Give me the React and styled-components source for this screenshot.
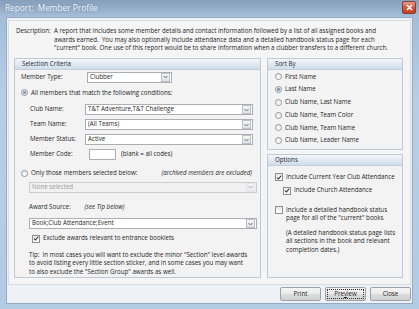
import React from 'react'
import styled, { createGlobalStyle } from 'styled-components'

const Global = createGlobalStyle`
html, body {
margin: 0;
padding: 0;
background: #b4cbe5;
}
* {
box-sizing: border-box;
}
`

function Arrow() {
    return (
        <svg width="5" height="4" viewBox="0 0 5 4">
            <path d="M0.5 1 L2.5 3 L4.5 1" fill="none" stroke="#6a6f78" strokeWidth="1"/>
        </svg>
    )
}

function Select(props) {
    return (
        <SelectBox width={props.width} disabled={props.disabled}>
            <SelectText disabled={props.disabled}>{props.value}</SelectText>
            <SelectButton disabled={props.disabled}><Arrow/></SelectButton>
        </SelectBox>
    )
}

function Radio(props) {
    return (
        <RadioRow top={props.top}>
            <RadioDot checked={props.checked}/>
            <span>{props.children}</span>
        </RadioRow>
    )
}

function Check(props) {
    return (
        <CheckRow indent={props.indent} top={props.top}>
            <CheckBox>
                {props.checked &&
                <svg width="7" height="7" viewBox="0 0 7 7">
                    <path d="M1 3.5 L2.8 5.3 L6 1.5" fill="none" stroke="#222" strokeWidth="1.2"/>
                </svg>
                }
            </CheckBox>
            <span>{props.children}</span>
        </CheckRow>
    )
}

function App() {
    return (
        <Window>
            <Global/>
            <TitleBar>
                <Title>Report:&nbsp; Member Profile</Title>
                <CloseButton>
                    <svg width="7" height="7" viewBox="0 0 7 7">
                        <path d="M1 1 L6 6 M6 1 L1 6" stroke="#fff" strokeWidth="1.6"/>
                    </svg>
                </CloseButton>
            </TitleBar>

            <Client>
                <Panel>
                    <Description>
                        <DescLabel>Description:</DescLabel>
                        <DescText>
                            A report that includes some member details and contact information followed by a list of all assigned books and<br/>
                            awards earned.&nbsp; You may also optionally include attendance data and a detailed handbook status page for each<br/>
                            "current" book. One use of this report would be to share information when a clubber transfers to a different church.
                        </DescText>
                    </Description>

                    <Columns>
                        <Group>
                            <GroupHeader>Selection Criteria</GroupHeader>
                            <GroupBody>
                                <FieldRow top="2px">
                                    <FieldLabel width="66px">Member Type:</FieldLabel>
                                    <Select width="85px" value="Clubber"/>
                                </FieldRow>

                                <Radio checked top="6px">All members that match the following conditions:</Radio>

                                <Conditions>
                                    <FieldRow top="7px">
                                        <FieldLabel width="55px">Club Name:</FieldLabel>
                                        <Select width="171px" value="T&T Adventure,T&T Challenge"/>
                                    </FieldRow>
                                    <FieldRow top="4px">
                                        <FieldLabel width="55px">Team Name:</FieldLabel>
                                        <Select width="171px" value="(All Teams)"/>
                                    </FieldRow>
                                    <FieldRow top="4px">
                                        <FieldLabel width="55px">Member Status:</FieldLabel>
                                        <Select width="171px" value="Active"/>
                                    </FieldRow>
                                    <FieldRow top="4px">
                                        <FieldLabel width="57px">Member Code:</FieldLabel>
                                        <CodeInput/>
                                        <Hint>(blank = all codes)</Hint>
                                    </FieldRow>
                                </Conditions>

                                <OnlyRow>
                                    <Radio>Only those members selected below:</Radio>
                                    <Italic>(archived members are excluded)</Italic>
                                </OnlyRow>
                                <Indented top="4px">
                                    <Select width="228px" value="None selected" disabled/>
                                </Indented>

                                <AwardLabel>
                                    Award Source:<Italic>(see Tip below)</Italic>
                                </AwardLabel>
                                <Indented top="7px">
                                    <Select width="228px" value="Book;Club Attendance;Event"/>
                                </Indented>
                                <Check checked indent="11px" top="5px">Exclude awards relevant to entrance booklets</Check>

                                <Tip>
                                    Tip:&nbsp; In most cases you will want to exclude the minor "Section" level awards<br/>
                                    to avoid listing every little section sticker, and in some cases you may want<br/>
                                    to also exclude the "Section Group" awards as well.
                                </Tip>
                            </GroupBody>
                        </Group>

                        <SideColumn>
                            <Group height="92px">
                                <GroupHeader>Sort By</GroupHeader>
                                <SortBody>
                                    <Radio>First Name</Radio>
                                    <Radio checked>Last Name</Radio>
                                    <Radio>Club Name, Last Name</Radio>
                                    <Radio>Club Name, Team Color</Radio>
                                    <Radio>Club Name, Team Name</Radio>
                                    <Radio>Club Name, Leader Name</Radio>
                                </SortBody>
                            </Group>

                            <Group>
                                <GroupHeader>Options</GroupHeader>
                                <OptionsBody>
                                    <Check checked>Include Current Year Club Attendance</Check>
                                    <Check checked indent="8px" top="5px">Include Church Attendance</Check>
                                    <Check top="11px">Include a detailed handbook status<br/>page for all of the "current" books</Check>
                                    <Note>
                                        (A detailed handbook status page lists<br/>
                                        all sections in the book and relevant<br/>
                                        completion dates.)
                                    </Note>
                                </OptionsBody>
                            </Group>
                        </SideColumn>
                    </Columns>
                </Panel>

                <ButtonRow>
                    <Button>Print</Button>
                    <Button focused>Pre<u>v</u>iew</Button>
                    <Button>Close</Button>
                </ButtonRow>
            </Client>
        </Window>
    )
}

export default App

const Window = styled.div`
width: 419px;
height: 309px;
display: flex;
flex-direction: column;
background: linear-gradient(#9fb9d6, #b7cde6 30%, #b4cbe5);
padding: 0 6px 5px 6px;
font-family: "Open Sans", "Noto Sans", sans-serif;
font-size: 6.2px;
line-height: 8.5px;
color: #1f1f1f;
`

const TitleBar = styled.div`
height: 17px;
flex: none;
display: flex;
align-items: center;
justify-content: space-between;
margin: 0 -6px;
padding: 0 3px 0 5px;
background: linear-gradient(#869fbc, #98b1cc 60%, #a7bfd9);
`

const Title = styled.div`
font-size: 8.3px;
color: #f2f5f9;
text-shadow: 0 0 3px #6c85a2;
`

const CloseButton = styled.div`
width: 14px;
height: 13px;
margin-top: -2px;
border-radius: 2px;
border: 1px solid #8b3a30;
background: linear-gradient(#e99b8c, #d35a44 50%, #c23d24);
display: flex;
align-items: center;
justify-content: center;
`

const Client = styled.div`
flex: 1;
display: flex;
flex-direction: column;
background: #eef1f5;
border: 1px solid #95aac4;
padding: 2px 1px 0 1px;
`

const Panel = styled.div`
flex: none;
height: 265px;
background: #f5f5f5;
border: 1px solid #d6dde5;
padding: 6px 7px 0 5px;
display: flex;
flex-direction: column;
`

const Description = styled.div`
display: flex;
white-space: nowrap;
`

const DescLabel = styled.div`
width: 40px;
flex: none;
padding-left: 2px;
`

const DescText = styled.div`
flex: 1;
`

const Columns = styled.div`
display: flex;
gap: 6px;
margin-top: 5px;
height: 220px;
`

const SideColumn = styled.div`
width: 136px;
flex: none;
display: flex;
flex-direction: column;
gap: 4px;
`

const Group = styled.div`
flex: ${props => props.height ? 'none' : '1'};
height: ${props => props.height || 'auto'};
min-width: 0;
display: flex;
flex-direction: column;
border: 1px solid #bccad8;
background: #f3f3f3;
`

const GroupHeader = styled.div`
height: 11px;
flex: none;
padding-left: 7px;
line-height: 10px;
background: linear-gradient(#f4f7fa, #dfe7f0 55%, #d2dde9);
border-bottom: 1px solid #c3cfdc;
color: #1e2a38;
`

const GroupBody = styled.div`
padding: 0 7px 0 6px;
display: flex;
flex-direction: column;
`

const SortBody = styled.div`
padding: 3px 7px 0 7px;
display: flex;
flex-direction: column;
gap: 4.3px;
`

const OptionsBody = styled.div`
padding: 7px 7px 0 7px;
display: flex;
flex-direction: column;
`

const FieldRow = styled.div`
display: flex;
align-items: center;
height: 11px;
flex: none;
margin-top: ${props => props.top || '0'};
`

const FieldLabel = styled.div`
width: ${props => props.width};
flex: none;
`

const SelectBox = styled.div`
width: ${props => props.width};
height: 11px;
display: flex;
align-items: center;
background: ${props => props.disabled ? '#f1f1f1' : '#ffffff'};
border: 1px solid ${props => props.disabled ? '#c9cdd2' : '#abadb3'};
`

const SelectText = styled.div`
flex: 1;
padding-left: 2px;
white-space: nowrap;
overflow: hidden;
color: ${props => props.disabled ? '#9a9a9a' : '#1f1f1f'};
`

const SelectButton = styled.div`
width: 9px;
height: 9px;
margin-right: 1px;
display: flex;
align-items: center;
justify-content: center;
border: 1px solid ${props => props.disabled ? '#dadada' : '#b9c0c8'};
background: linear-gradient(#f6f6f6, #dfe2e6);
opacity: ${props => props.disabled ? 0.5 : 1};
`

const RadioRow = styled.div`
display: flex;
align-items: center;
gap: 3px;
height: 8.5px;
flex: none;
margin-top: ${props => props.top || '0'};
white-space: nowrap;
`

const RadioDot = styled.div`
width: 7px;
height: 7px;
flex: none;
border-radius: 50%;
border: 1px solid #8e97a1;
background: ${props => props.checked
    ? 'radial-gradient(circle, #8b98a6 0 1.3px, #d9dee3 1.6px, #f7f7f7 3px)'
    : 'linear-gradient(#e9ebee, #ffffff)'};
`

const Conditions = styled.div`
padding-left: 9px;
display: flex;
flex-direction: column;
`

const CodeInput = styled.div`
width: 27px;
height: 11px;
background: #ffffff;
border: 1px solid #abadb3;
margin-left: 2px;
`

const Hint = styled.div`
margin-left: 5px;
`

const OnlyRow = styled.div`
display: flex;
justify-content: space-between;
align-items: center;
margin-top: 9px;
padding-right: 1px;
`

const Italic = styled.span`
font-style: italic;
margin-left: 14px;
`

const Indented = styled.div`
padding-left: 8px;
margin-top: ${props => props.top || '0'};
`

const AwardLabel = styled.div`
padding-left: 8px;
margin-top: 10px;
`

const CheckRow = styled.div`
display: flex;
align-items: flex-start;
gap: 3px;
white-space: nowrap;
padding-left: ${props => props.indent || '0'};
margin-top: ${props => props.top || '0'};
`

const CheckBox = styled.div`
width: 8px;
height: 8px;
flex: none;
margin-top: 0.5px;
border: 1px solid #8f8f8f;
background: linear-gradient(#e6e8ea, #ffffff);
display: flex;
align-items: center;
justify-content: center;
`

const Tip = styled.div`
padding-left: 8px;
margin-top: 8px;
white-space: nowrap;
`

const Note = styled.div`
margin-top: 6px;
padding-left: 11px;
white-space: nowrap;
`

const ButtonRow = styled.div`
flex: 1;
display: flex;
justify-content: flex-end;
align-items: flex-start;
gap: 4px;
padding: 2px 0 0 0;
`

const Button = styled.div`
width: 41px;
height: 14px;
display: flex;
align-items: center;
justify-content: center;
border-radius: 2px;
border: 1px solid #9ea4ab;
background: linear-gradient(#f4f4f4, #ebebeb 48%, #dcdcdc 52%, #cfd0d2);
outline: ${props => props.focused ? '1px dotted #333' : 'none'};
outline-offset: -3px;
color: #1f1f1f;
`
